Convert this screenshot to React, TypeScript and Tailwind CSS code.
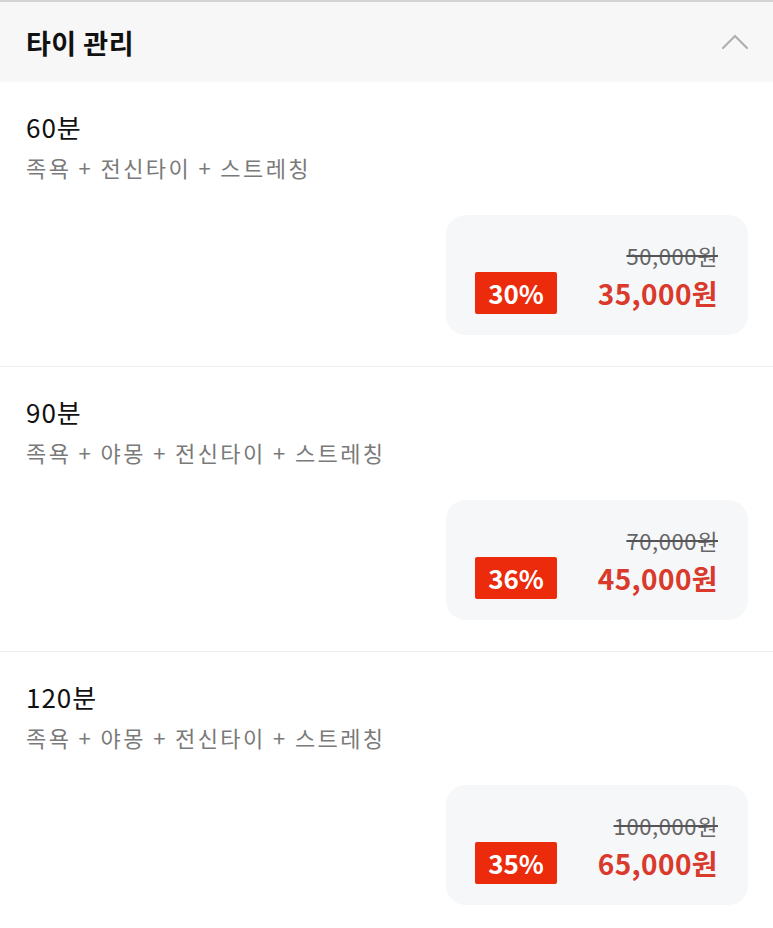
const items = [
  { time: "60분", desc: "족욕 + 전신타이 + 스트레칭", original: "50,000원", rate: "30%", price: "35,000원" },
  { time: "90분", desc: "족욕 + 야몽 + 전신타이 + 스트레칭", original: "70,000원", rate: "36%", price: "45,000원" },
  { time: "120분", desc: "족욕 + 야몽 + 전신타이 + 스트레칭", original: "100,000원", rate: "35%", price: "65,000원" },
];

export default function App() {
  return (
    <div
      className="min-h-[928px] w-[773px] bg-white text-[#111]"
      style={{ fontFamily: '"Noto Sans CJK KR", "Noto Sans", sans-serif' }}
    >
      <div className="flex h-[82px] items-center justify-between border-t-2 border-[#d4d4d4] bg-[#f7f7f7] pl-[26px] pr-[24px]">
        <h2 className="text-[27px] font-bold leading-none tracking-[0.5px]">타이 관리</h2>
        <svg width="28" height="28" viewBox="0 0 28 28" fill="none">
          <path d="M2 20 L14 8 L26 20" stroke="#b0b0b0" strokeWidth="2.2" strokeLinecap="round" strokeLinejoin="round" />
        </svg>
      </div>

      {items.map((item, i) => (
        <div
          key={item.time}
          className={`px-[26px] pb-[31px] pt-[28px] ${i < items.length - 1 ? "border-b border-[#efefef]" : ""}`}
        >
          <p className="text-[26px] font-normal leading-[34px] tracking-[1px]">{item.time}</p>
          <p className="mt-[7px] text-[22px] leading-[32px] tracking-[2.4px] text-[#7a7a7a]">{item.desc}</p>
          <div className="ml-auto mr-[-1px] mt-[32px] flex h-[120px] w-[302px] flex-col rounded-[20px] bg-[#f6f7f9] pl-[29px] pr-[30px] pt-[28px]">
            <p className="text-right text-[22px] leading-[24px] tracking-[0.6px] text-[#666] line-through decoration-[#555]">
              {item.original}
            </p>
            <div className="mt-[5px] flex items-center justify-between">
              <span className="flex h-[42px] w-[82px] items-center justify-center rounded-[2px] bg-[#ec2a0c] text-[26px] font-bold leading-none text-white">
                {item.rate}
              </span>
              <span className="text-[28px] font-bold leading-none tracking-[0.4px] text-[#d93a2b]">{item.price}</span>
            </div>
          </div>
        </div>
      ))}
    </div>
  );
}
